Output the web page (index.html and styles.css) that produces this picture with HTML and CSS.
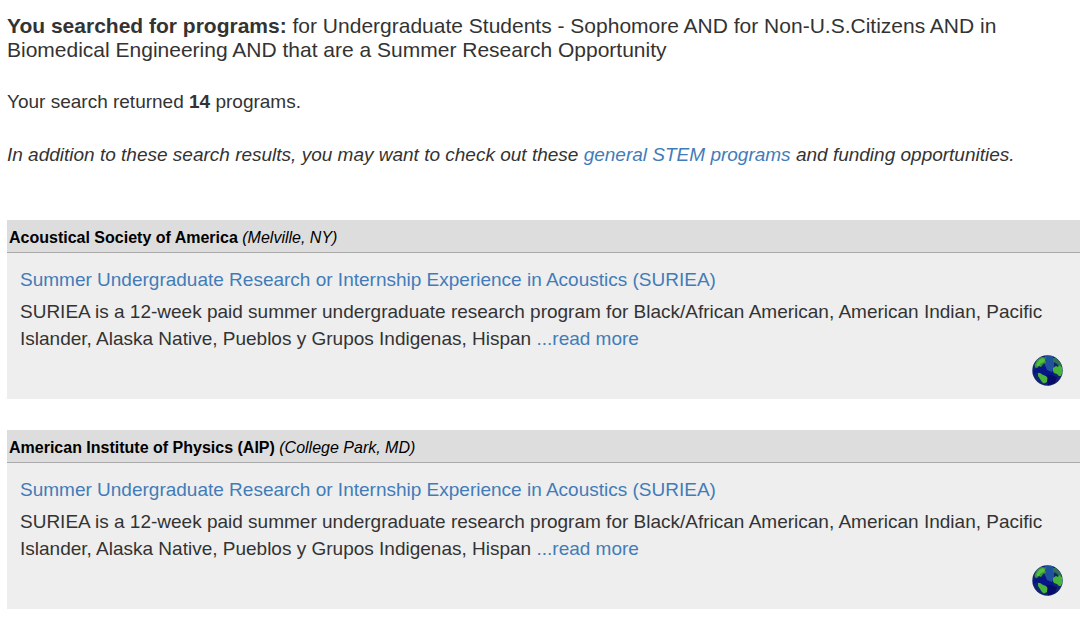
FILE: index.html
```html
<!DOCTYPE html>
<html lang="en">
<head>
  <meta charset="UTF-8">
  <meta name="viewport" content="width=device-width, initial-scale=1">
  <title>Program Search Results</title>
  <link rel="stylesheet" href="styles.css">
</head>
<body>

  <!-- globe icon, used once per program -->
  <svg class="sprite" aria-hidden="true">
    <symbol id="globe" viewBox="0 0 31 31">
      <circle cx="15.5" cy="15.5" r="15.2" fill="#10246f"/>
      <path d="M2 15 L8 12 L14 11 L20 15 L22 21 L13 20 L6 17 L1 19 Z" fill="#081587"/>
      <path d="M13 1 L21 1 L22 6 L22 12 L20 17 L15 15 L13 10 Z" fill="#1f529b"/>
      <path d="M13 20 L19 20 L25 22 L23 28 L16 30.5 L15 25 Z" fill="#070c68"/>
      <path d="M2.5 10 L5 5 L9 2 L14 2.5 L13 5 L14 8 L11 9 L9 12 L7 11 L5 13 L3 12.5 Z" fill="#3b9440"/>
      <path d="M4.5 9 L7 5 L11 3 L13 5 L12 7 L9 8 L7 11 L5 11 Z" fill="#55c23d"/>
      <path d="M6 18 L8 18 L11 20 L14 21 L15.5 23 L15 27 L12 28.5 L10 27 L8 24 L6 21 Z" fill="#47b338"/>
      <path d="M21 3 L24 3 L28 7 L30 11 L27 11 L24 8 L21 7 Z" fill="#2f7150"/>
      <path d="M21 13 L24 11 L26 12 L27 10 L30 12 L30.5 17 L29 21 L27 21 L25 19 L22 18 L21 16 Z" fill="#47b338"/>
    </symbol>
  </svg>

  <main class="results">
    <h1 class="search-terms"><strong>You searched for programs:</strong> for Undergraduate Students - Sophomore AND for Non-U.S.Citizens AND in Biomedical Engineering AND that are a Summer Research Opportunity</h1>
    <p>Your search returned <strong>14</strong> programs.</p>
    <p><em>In addition to these search results, you may want to check out these <a href="#">general STEM programs</a> and funding opportunities.</em></p>

    <div class="program-list">
      <section class="program">
        <h2 class="institution">Acoustical Society of America <em>(Melville, NY)</em></h2>
        <div class="program-body">
          <a class="program-title" href="#">Summer Undergraduate Research or Internship Experience in Acoustics (SURIEA)</a>
          <p>SURIEA is a 12-week paid summer undergraduate research program for Black/African American, American Indian, Pacific Islander, Alaska Native, Pueblos y Grupos Indigenas, Hispan <a href="#">...read more</a></p>
          <svg class="globe" role="img" aria-label="Open to non-U.S. citizens"><use href="#globe"/></svg>
        </div>
      </section>

      <section class="program">
        <h2 class="institution">American Institute of Physics (AIP) <em>(College Park, MD)</em></h2>
        <div class="program-body">
          <a class="program-title" href="#">Summer Undergraduate Research or Internship Experience in Acoustics (SURIEA)</a>
          <p>SURIEA is a 12-week paid summer undergraduate research program for Black/African American, American Indian, Pacific Islander, Alaska Native, Pueblos y Grupos Indigenas, Hispan <a href="#">...read more</a></p>
          <svg class="globe" role="img" aria-label="Open to non-U.S. citizens"><use href="#globe"/></svg>
        </div>
      </section>
    </div>
  </main>

</body>
</html>
```
FILE: styles.css
```css
body {
  margin: 0;
  background: #fff;
  color: #333;
  font-family: "Liberation Sans", Arial, Helvetica, sans-serif;
  font-size: 19px;
  line-height: 27px;
}
a {
  color: #427cb8;
  text-decoration: none;
}
a:hover { text-decoration: underline; }
p { margin: 0; }

.sprite {
  display: none;
}
.results {
  display: flex;
  flex-direction: column;
  gap: 26px;
  padding: 14px 0 10px 7px;
}
.search-terms {
  margin: 0;
  font-size: 21px;
  font-weight: normal;
  line-height: 24px;
}

.program-list {
  display: flex;
  flex-direction: column;
  gap: 31px;
  margin-top: 26px;
}
.program {
  background: #eee;
}
.institution {
  margin: 0;
  padding: 4px 2px 1px;
  background: #ddd;
  border-bottom: 1px solid #aaa;
  color: #000;
  font-size: 16px;
  line-height: 27px;
}
.institution em { font-weight: normal; }
.program-body {
  display: flex;
  flex-direction: column;
  padding: 13px 17px 13px 13px;
}
.program-title {
  align-self: flex-start;
  margin-bottom: 5px;
}
.globe {
  align-self: flex-end;
  width: 31px;
  height: 31px;
  margin-top: 3px;
}
```
